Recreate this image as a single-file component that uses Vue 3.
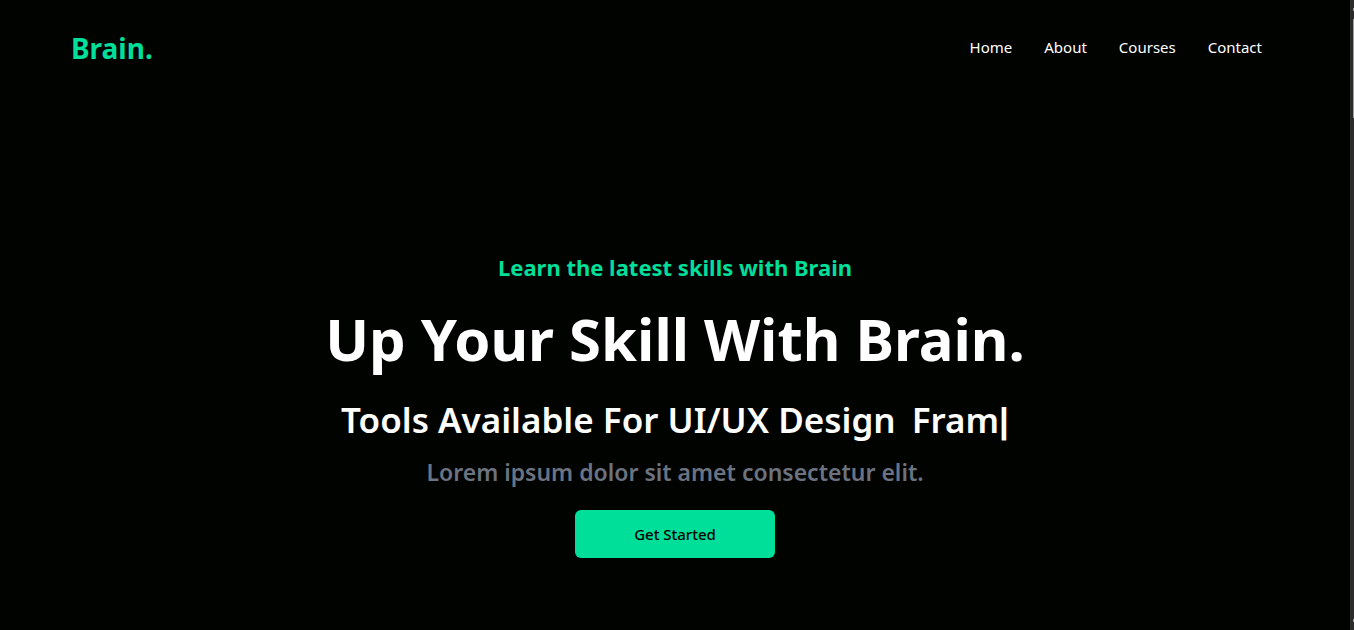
<script setup>
const links = ['Home', 'About', 'Courses', 'Contact']
</script>

<template>
  <div class="page">
    <header class="bar">
      <h1 class="brand">Brain.</h1>
      <nav class="nav">
        <a v-for="link in links" :key="link" :href="'#' + link.toLowerCase()">{{ link }}</a>
      </nav>
    </header>
    <main class="hero">
      <p class="eyebrow">Learn the latest skills with Brain</p>
      <h2 class="title">Up Your Skill With Brain.</h2>
      <div class="tools">
        <p>Tools Available For UI/UX Design</p>
        <p>Fram<span class="caret">|</span></p>
      </div>
      <p class="lead">Lorem ipsum dolor sit amet consectetur elit.</p>
      <button class="cta" type="button">Get Started</button>
    </main>
    <div class="scroll">
      <div class="arrow"></div>
      <div class="thumb"></div>
      <div class="arrow last"></div>
    </div>
  </div>
</template>

<style>
html, body { background: #000300; }
</style>

<style scoped>
.page {
  position: relative;
  min-height: 100vh;
  box-sizing: border-box;
  padding-right: 4px;
  background: #000300;
  color: #fff;
  font-family: "Noto Sans", "Open Sans", sans-serif;
}
h1, h2, p { margin: 0; }
.bar {
  display: flex;
  align-items: center;
  justify-content: space-between;
  height: 96px;
  padding: 0 88px 0 71px;
}
.brand { font-size: 28px; line-height: 36px; font-weight: 700; color: #00df9a; }
.nav { display: flex; gap: 32px; padding-bottom: 2px; }
.nav a { color: #fff; text-decoration: none; font-size: 15px; line-height: 24px; }
.hero {
  display: flex;
  flex-direction: column;
  align-items: center;
  padding-top: 152px;
  text-align: center;
}
.eyebrow { font-size: 22px; line-height: 38px; font-weight: 700; color: #00df9a; }
.title { margin-top: 18px; font-size: 58px; line-height: 70px; font-weight: 700; }
.tools { display: flex; gap: 16px; margin-top: 18px; font-size: 35px; line-height: 56px; font-weight: 650; }
.caret { font-family: "Liberation Sans", sans-serif; font-weight: 700; line-height: 1; }
.lead { margin-top: 8px; font-size: 23px; line-height: 32px; font-weight: 650; color: #6b7280; }
.cta {
  width: 200px;
  height: 48px;
  margin-top: 22px;
  border: 0;
  border-radius: 6px;
  background: #00df9a;
  color: #000;
  font: 500 15px/24px "Noto Sans", "Open Sans", sans-serif;
}
.scroll {
  position: absolute;
  top: 0;
  right: 0;
  bottom: 0;
  display: flex;
  flex-direction: column;
  align-items: flex-end;
  width: 4px;
  padding: 8px 0;
  box-sizing: border-box;
  background: #2c2c2c;
}
.arrow { width: 1px; height: 3px; background: #9f9f9f; }
.last { margin-top: auto; }
.thumb { width: 1px; height: 99px; margin-top: 8px; background: #9f9f9f; }
</style>
